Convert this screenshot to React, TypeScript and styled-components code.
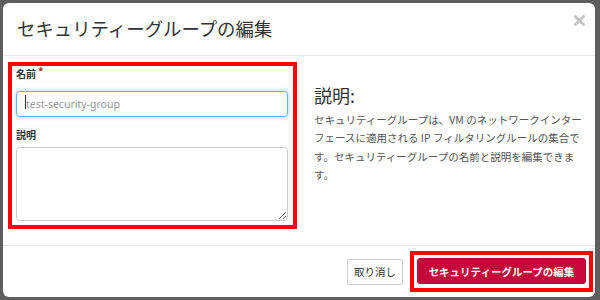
import React from 'react';
import styled, { createGlobalStyle } from 'styled-components';

const GlobalStyle = createGlobalStyle`
	html, body {
		margin: 0;
		padding: 0;
		background: #5e5e5e;
		font-family: 'Noto Sans CJK JP', 'Noto Sans', sans-serif;
		color: #333;
	}
	* {
		box-sizing: border-box;
	}
`;

function CloseIcon() {
	return (
		<svg width='11' height='11' viewBox='0 0 11 11'>
			<path d='M1.5 1.5 L9.5 9.5 M9.5 1.5 L1.5 9.5' stroke='#c4c4c4' strokeWidth='2.8' strokeLinecap='square' />
		</svg>
	);
}

function App() {
	return (
		<>
			<GlobalStyle />
			<Modal>
				<Header>
					<Title>セキュリティーグループの編集</Title>
					<Close aria-label='閉じる'>
						<CloseIcon />
					</Close>
				</Header>

				<Body>
					<Highlight>
						<Label>
							名前<Required>*</Required>
						</Label>
						<InputBox>
							<Caret />
							<Input placeholder='test-security-group' />
						</InputBox>
						<Label $gap={12}>説明</Label>
						<Textarea />
					</Highlight>

					<Help>
						<HelpTitle>説明:</HelpTitle>
						<HelpText>
							セキュリティーグループは、VM のネットワークインターフェースに適用される IP
							フィルタリングルールの集合です。セキュリティーグループの名前と説明を編集できます。
						</HelpText>
					</Help>
				</Body>

				<Footer>
					<CancelButton>取り消し</CancelButton>
					<ButtonHighlight>
						<SubmitButton>セキュリティーグループの編集</SubmitButton>
					</ButtonHighlight>
				</Footer>
			</Modal>
		</>
	);
}

const Modal = styled('div')`
	margin: 3px 0 0 3px;
	width: 592px;
	height: 294px;
	background: #fff;
	border-radius: 6px;
	display: flex;
	flex-direction: column;
	overflow: hidden;
`;

const Header = styled('div')`
	height: 53px;
	display: flex;
	justify-content: space-between;
	align-items: center;
	padding: 0 10px 0 14px;
	border-bottom: 1px solid #e8e8e8;
`;

const Title = styled('h4')`
	margin: 0 0 2px;
	font-size: 18.4px;
	font-weight: 400;
	line-height: 24px;
	color: #333;
`;

const Close = styled('button')`
	align-self: flex-start;
	margin-top: 12px;
	padding: 0;
	border: none;
	background: none;
	display: flex;
`;

const Body = styled('div')`
	height: 189px;
	display: flex;
	padding: 6px 0 0 5px;
`;

const Highlight = styled('div')`
	width: 289px;
	height: 167px;
	border: 4px solid #ff0000;
	padding: 0 5px 4px 4px;
	display: flex;
	flex-direction: column;
`;

const Label = styled('label')<{ $gap?: number }>`
	margin-top: ${(p) => p.$gap || 0}px;
	font-size: 10px;
	font-weight: 700;
	line-height: 16px;
	color: #333;
`;

const Required = styled('span')`
	color: #c8102e;
	font-size: 11px;
	margin-left: 2px;
	vertical-align: top;
	line-height: 10px;
`;

const InputBox = styled('div')`
	position: relative;
	margin-top: 7px;
	height: 26px;
`;

const Caret = styled('span')`
	position: absolute;
	left: 9px;
	top: 6px;
	width: 1px;
	height: 14px;
	background: #333;
`;

const Input = styled('input')`
	height: 26px;
	width: 100%;
	border: 1px solid #66afe9;
	border-radius: 4px;
	box-shadow: 0 0 4px rgba(102, 175, 233, 0.6);
	padding: 0 0 0 9px;
	font-family: 'Noto Sans', sans-serif;
	font-size: 10.5px;
	color: #333;
	outline: none;
	&::placeholder {
		color: #999;
	}
`;

const Textarea = styled('textarea')`
	margin-top: 4px;
	height: 74px;
	width: 100%;
	border: 1px solid #ccc;
	border-radius: 4px;
	outline: none;
	resize: vertical;
`;

const Help = styled('div')`
	margin-left: 17px;
	width: 273px;
	padding-top: 21px;
`;

const HelpTitle = styled('h3')`
	margin: 0;
	font-size: 18px;
	font-weight: 400;
	line-height: 24px;
	color: #333;
`;

const HelpText = styled('p')`
	margin: 4px 0 0;
	font-size: 10.5px;
	line-height: 18.3px;
	color: #555;
`;

const Footer = styled('div')`
	flex: 1;
	border-top: 1px solid #e8e8e8;
	display: flex;
	justify-content: flex-end;
	align-items: center;
	padding: 0 2px 0 0;
	gap: 7px;
`;

const CancelButton = styled('button')`
	height: 26px;
	width: 56px;
	padding: 0;
	border: 1px solid #ccc;
	border-radius: 3px;
	background: #fff;
	font-family: 'Noto Sans CJK JP', sans-serif;
	font-size: 10.5px;
	color: #333;
`;

const ButtonHighlight = styled('div')`
	border: 4px solid #ff0000;
	padding: 3px 3px 4px 3px;
	display: flex;
`;

const SubmitButton = styled('button')`
	height: 26px;
	width: 169px;
	padding: 0;
	border: 1px solid #b00634;
	border-radius: 3px;
	background: #c6073b;
	color: #fff;
	font-family: 'Noto Sans CJK JP', sans-serif;
	font-size: 10.5px;
	font-weight: 700;
`;

export default App;
